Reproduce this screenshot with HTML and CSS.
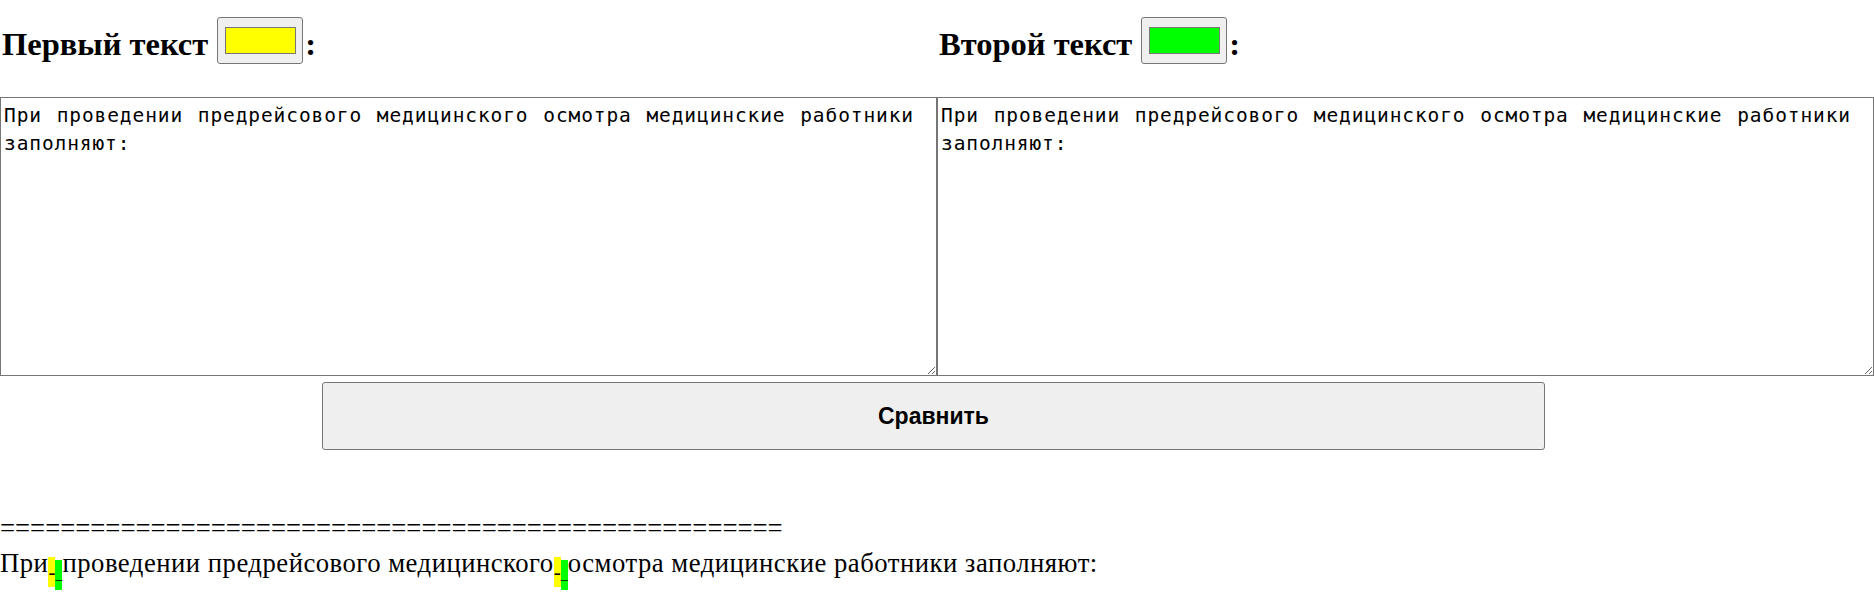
FILE: index.html
```html
<!DOCTYPE html>
<html>
<head>
  <meta charset="UTF-8">
  <link rel="stylesheet" href="styles.css">
</head>
<body>
  <div class="compare-form">
    <div class="columns">
      <div class="column">
        <h1 class="column-title">
          <span class="title-text">Первый текст</span>
          <span class="color-picker"><span class="color-swatch swatch-first"></span></span>
          <span class="title-text">:</span>
        </h1>
        <textarea class="text-input" id="firstText">При проведении предрейсового медицинского осмотра медицинские работники заполняют:</textarea>
      </div>
      <div class="column">
        <h1 class="column-title">
          <span class="title-text">Второй текст</span>
          <span class="color-picker"><span class="color-swatch swatch-second"></span></span>
          <span class="title-text">:</span>
        </h1>
        <textarea class="text-input" id="secondText">При проведении предрейсового медицинского осмотра медицинские работники заполняют:</textarea>
      </div>
    </div>
    <button class="compare-button" id="compareButton">Сравнить</button>
  </div>

  <div class="result">
    <div class="separator">====================================================</div>
    <div class="diff-line">При<span class="mark mark-first">-</span><span class="mark mark-second">_</span>проведении предрейсового медицинского<span class="mark mark-first">-</span><span class="mark mark-second">_</span>осмотра медицинские работники заполняют:</div>
  </div>
</body>
</html>
```

FILE: styles.css
```css
body {
  margin: 0;
  padding: 0;
  font-family: "Liberation Serif", "Times New Roman", serif;
  background-color: white;
  color: black;
}
.columns {
  display: flex;
}
.column {
  width: 50%;
  display: flex;
  flex-direction: column;
}
.column-title {
  display: flex;
  align-items: center;
  margin: 0;
  padding: 17px 0 33px 2px;
  height: 47px;
  font-size: 32.5px;
  font-weight: bold;
}
.title-text {
  padding-top: 8px;
}
.color-picker {
  display: flex;
  align-items: center;
  justify-content: center;
  box-sizing: border-box;
  width: 86px;
  height: 47px;
  margin-left: 9px;
  margin-right: 2px;
  background-color: #efefef;
  border: 1px solid #767676;
  border-radius: 3px;
}
.color-swatch {
  box-sizing: border-box;
  width: 71px;
  height: 27px;
  border: 1px solid #777;
}
.swatch-first {
  background-color: #ffff00;
}
.swatch-second {
  background-color: #00ff00;
}
.text-input {
  box-sizing: border-box;
  width: 100%;
  height: 279px;
  margin: 0;
  padding: 4px 22px 2px 3px;
  border: 1px solid #767676;
  font-family: "DejaVu Sans Mono", monospace;
  font-size: 19.5px;
  letter-spacing: 0.9px;
  line-height: 27.5px;
  text-align: justify;
  color: black;
}
.compare-button {
  display: block;
  width: 1223px;
  height: 68px;
  margin: 6px 0 0 322px;
  background-color: #efefef;
  border: 1px solid #767676;
  border-radius: 3px;
  font-family: "Liberation Sans", Arial, sans-serif;
  font-size: 23px;
  font-weight: bold;
  color: black;
}
.result {
  margin-top: 63px;
  font-size: 26.7px;
  line-height: 31px;
}
.separator {
  white-space: nowrap;
}
.diff-line {
  margin-top: 4px;
  letter-spacing: 0.5px;
}
.mark {
  display: inline-block;
  width: 7px;
  height: 30px;
  vertical-align: -7px;
  line-height: 30px;
  letter-spacing: 0;
}
.mark-first {
  background-color: #ffff00;
  font-size: 21px;
}
.mark-second {
  background-color: #00ff00;
  font-size: 14px;
}
```
